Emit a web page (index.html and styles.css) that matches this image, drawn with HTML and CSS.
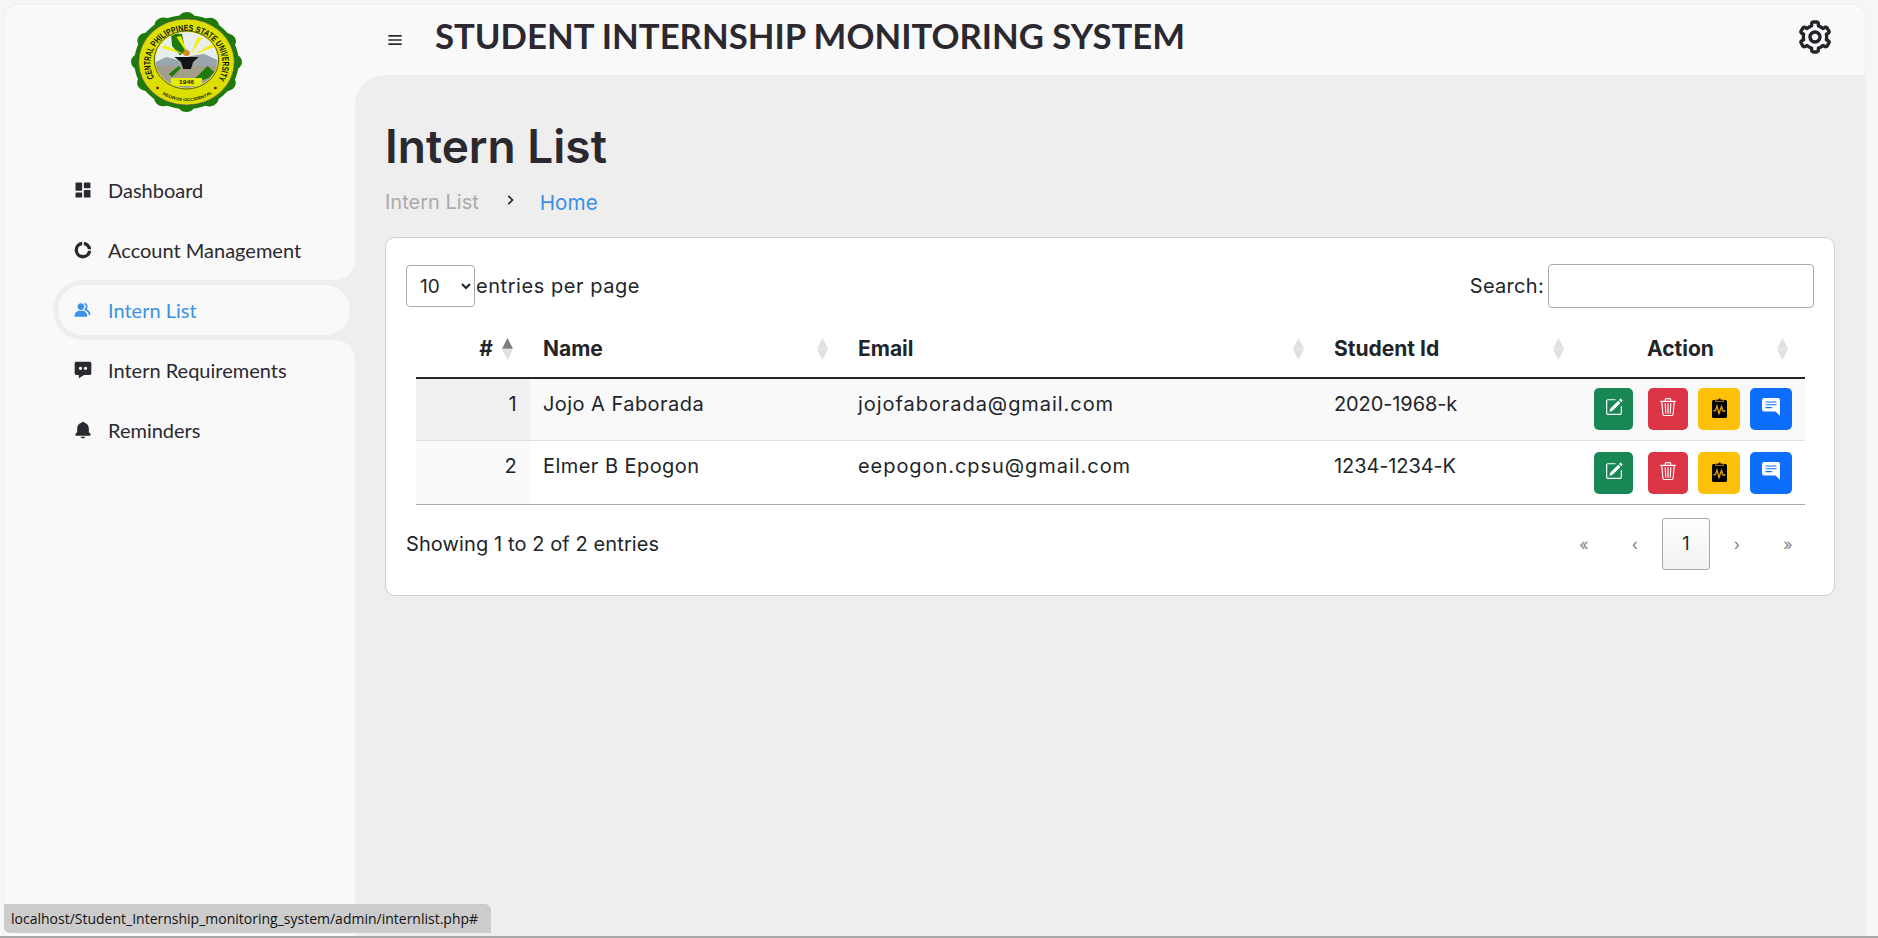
FILE: index.html
```html
<!DOCTYPE html>
<html lang="en">
<head>
    <meta charset="UTF-8">
    <title>Intern List</title>
    <link rel="stylesheet" href="styles.css">
</head>
<body>
    <div class="window">
        <aside class="sidebar">
            <div class="brand">
                <svg class="seal" viewBox="0 0 100 100" preserveAspectRatio="none">
                    <circle cx="50" cy="50" r="47" fill="#1f7a0c"/>
                    <circle cx="50" cy="50" r="42" fill="none" stroke="#1f7a0c" stroke-width="16" stroke-linecap="round" stroke-dasharray="0.01 21.980"/>
                    <circle cx="50" cy="50" r="43" fill="#dbe000" stroke="#7a2fa0" stroke-width="0.5"/>
                    <circle cx="50" cy="48" r="29" fill="#e6ee00" stroke="#111" stroke-width="0.6"/>
                    <path id="sealTop" d="M 21 66 A 32.500 32.500 0 1 1 79 66" fill="none"/>
                    <text class="seal-text"><textPath href="#sealTop" textLength="134" lengthAdjust="spacingAndGlyphs">CENTRAL PHILIPPINES STATE UNIVERSITY</textPath></text>
                    <path id="sealBottom" d="M 25 80 A 39 39 0 0 0 75 80" fill="none"/>
                    <text class="seal-small"><textPath href="#sealBottom" textLength="48" startOffset="4" lengthAdjust="spacingAndGlyphs">NEGROS OCCIDENTAL</textPath></text>
                    <circle cx="24" cy="76" r="1.300" fill="#7a1010"/>
                    <circle cx="76" cy="76" r="1.300" fill="#7a1010"/>
                    <clipPath id="sealInner"><circle cx="50" cy="48" r="28"/></clipPath>
                    <g clip-path="url(#sealInner)">
                        <rect x="20" y="20" width="60" height="60" fill="#e8eded"/>
                        <path d="M22 50 L32 45 L42 48 L54 44 L66 42 L78 48 L78 60 L22 60 Z" fill="#9aa6ad"/>
                        <rect x="22" y="54" width="56" height="24" fill="#a39d8c"/>
                        <path d="M36 21 L46 22 L48 34 L51 40 L44 43 L37 34 Z" fill="#1f7a0c"/>
                        <path d="M60 64 L69 54 L75 60 L70 66 L62 69 L55 68 Z" fill="#1f7a0c"/>
                        <path d="M34 62 L43 54 L45 56 L37 65 Z" fill="#1f7a0c"/>
                        <path d="M41 25 L45 24 L51 42 Z M60 25 L64 26 L54 42 Z M28 36 L30 33 L50 43 Z M73 32 L75 35 L56 43 Z" fill="#f5f000"/>
                        <path d="M39 45 L61 45 L56 50 L54 57 L47 57 L45 50 Z" fill="#141414"/>
                        <circle cx="50" cy="41" r="3" fill="#d98a1e"/>
                        <rect x="36" y="66" width="28" height="8" fill="#e6ee00"/>
                    </g>
                    <text class="seal-year" x="50" y="72" text-anchor="middle">1946</text>
                </svg>
            </div>
            <ul class="side-menu">
                <li><a href="#">
                    <svg class="side-icon" viewBox="0 0 24 24"><path d="M4 13h6a1 1 0 0 0 1-1V4a1 1 0 0 0-1-1H4a1 1 0 0 0-1 1v8a1 1 0 0 0 1 1zm-1 7a1 1 0 0 0 1 1h6a1 1 0 0 0 1-1v-4a1 1 0 0 0-1-1H4a1 1 0 0 0-1 1v4zm10 0a1 1 0 0 0 1 1h6a1 1 0 0 0 1-1v-7a1 1 0 0 0-1-1h-6a1 1 0 0 0-1 1v7zm1-10h6a1 1 0 0 0 1-1V4a1 1 0 0 0-1-1h-6a1 1 0 0 0-1 1v5a1 1 0 0 0 1 1z"/></svg>
                    Dashboard</a></li>
                <li class="before-active"><a href="#">
                    <svg class="side-icon" viewBox="0 0 24 24"><path d="M13 2.100v4.060A6 6 0 0 1 17.840 11h4.060A10 10 0 0 0 13 2.100zM11 2.100A10 10 0 1 0 21.900 13h-4.060A6 6 0 1 1 11 6.160z"/></svg>
                    Account Management</a></li>
                <li class="active"><a href="#">
                    <svg class="side-icon" viewBox="0 0 24 24"><path d="M16.604 11.048a5.670 5.670 0 0 0 .751-3.440c-.179-1.784-1.175-3.361-2.803-4.440l-1.105 1.666c1.119.742 1.800 1.799 1.918 2.974a3.693 3.693 0 0 1-1.072 2.986l-1.192 1.192 1.618.475C18.951 13.701 19 17.957 19 18h2c0-1.789-.956-5.285-4.396-6.952z"/><path d="M9.500 12c2.206 0 4-1.794 4-4s-1.794-4-4-4-4 1.794-4 4 1.794 4 4 4zm1.500 1H8c-3.309 0-6 2.691-6 6v1h15v-1c0-3.309-2.691-6-6-6z"/></svg>
                    Intern List</a></li>
                <li class="after-active"><a href="#">
                    <svg class="side-icon" viewBox="0 0 24 24"><path fill-rule="evenodd" d="M20 2H4c-1.103 0-2 .897-2 2v12c0 1.103.897 2 2 2h3v3.767L13.277 18H20c1.103 0 2-.897 2-2V4c0-1.103-.897-2-2-2zM9 8a2 2 0 1 1 0 4 2 2 0 0 1 0-4zm6 0a2 2 0 1 1 0 4 2 2 0 0 1 0-4z"/></svg>
                    Intern Requirements</a></li>
                <li><a href="#">
                    <svg class="side-icon" viewBox="0 0 24 24"><path d="M12 22c1.311 0 2.407-.834 2.818-2H9.182C9.593 21.166 10.689 22 12 22zm7-7.414V10c0-3.217-2.185-5.927-5.145-6.742C13.562 2.520 12.846 2 12 2s-1.562.520-1.855 1.258C7.185 4.073 5 6.783 5 10v4.586l-1.707 1.707A.996.996 0 0 0 3 17v1a1 1 0 0 0 1 1h16a1 1 0 0 0 1-1v-1a.996.996 0 0 0-.293-.707L19 14.586z"/></svg>
                    Reminders</a></li>
            </ul>
        </aside>

        <div class="main">
            <header class="topbar">
                <svg class="menu-icon" viewBox="0 0 24 24"><path d="M4 6h16v2H4zm0 5h16v2H4zm0 5h16v2H4z"/></svg>
                <div class="app-title">STUDENT INTERNSHIP MONITORING SYSTEM</div>
                <svg class="cog-icon" viewBox="0 0 24 24"><path d="M12 16c2.206 0 4-1.794 4-4s-1.794-4-4-4-4 1.794-4 4 1.794 4 4 4zm0-6c1.084 0 2 .916 2 2s-.916 2-2 2-2-.916-2-2 .916-2 2-2z"/><path d="m2.845 16.136 1 1.730c.531.917 1.809 1.261 2.730.730l.529-.306A8.100 8.100 0 0 0 9 19.402V20c0 1.103.897 2 2 2h2c1.103 0 2-.897 2-2v-.598a8.132 8.132 0 0 0 1.896-1.111l.529.306c.923.530 2.198.188 2.731-.731l.999-1.729a2.001 2.001 0 0 0-.731-2.732l-.505-.292a7.718 7.718 0 0 0 0-2.224l.505-.292a2.002 2.002 0 0 0 .731-2.732l-.999-1.729c-.531-.920-1.808-1.265-2.731-.732l-.529.306A8.100 8.100 0 0 0 15 4.598V4c0-1.103-.897-2-2-2h-2c-1.103 0-2 .897-2 2v.598a8.132 8.132 0 0 0-1.896 1.111l-.529-.306c-.924-.531-2.200-.187-2.731.732l-.999 1.729a2.001 2.001 0 0 0 .731 2.732l.505.292a7.683 7.683 0 0 0 0 2.223l-.505.292a2.003 2.003 0 0 0-.731 2.733zm3.326-2.758A5.703 5.703 0 0 1 6 12c0-.462.058-.926.170-1.378a.999.999 0 0 0-.470-1.108l-1.123-.650.998-1.729 1.145.662a.997.997 0 0 0 1.188-.142 6.071 6.071 0 0 1 2.384-1.399A1 1 0 0 0 11 5.300V4h2v1.300a1 1 0 0 0 .708.956 6.083 6.083 0 0 1 2.384 1.399.999.999 0 0 0 1.188.142l1.144-.661 1 1.729-1.124.649a1 1 0 0 0-.470 1.108c.112.452.170.916.170 1.378 0 .461-.058.925-.171 1.378a1 1 0 0 0 .471 1.108l1.123.649-.998 1.729-1.145-.661a.996.996 0 0 0-1.188.142 6.071 6.071 0 0 1-2.384 1.399A1 1 0 0 0 13 18.700l.002 1.300H11v-1.300a1 1 0 0 0-.708-.956 6.083 6.083 0 0 1-2.384-1.399.992.992 0 0 0-1.188-.141l-1.144.662-1-1.729 1.124-.651a1 1 0 0 0 .471-1.108z"/></svg>
            </header>

            <main class="content">
                <h1>Intern List</h1>
                <div class="breadcrumb">
                    <span class="crumb">Intern List</span>
                    <svg class="crumb-sep" viewBox="0 0 24 24"><path d="M10.707 17.707 16.414 12l-5.707-5.707-1.414 1.414L13.586 12l-4.293 4.293z"/></svg>
                    <a class="crumb-link" href="#">Home</a>
                </div>

                <section class="card">
                    <div class="table-top">
                        <label class="per-page">
                            <select class="page-size"><option>10</option></select>entries per page
                        </label>
                        <label class="search">Search:<input class="search-input" type="text"></label>
                    </div>

                    <table class="intern-table">
                        <colgroup>
                            <col class="col-num"><col class="col-name"><col class="col-email"><col class="col-id"><col class="col-action">
                        </colgroup>
                        <thead>
                            <tr>
                                <th><div class="th-inner th-num">#
                                    <svg class="sort" viewBox="0 0 11 22"><path class="sort-up on" d="M5.500 0 11 10.700H0z"/><path class="sort-down" d="M5.500 22 0 11.300h11z"/></svg></div></th>
                                <th><div class="th-inner">Name
                                    <svg class="sort" viewBox="0 0 11 22"><path class="sort-up" d="M5.500 0 11 10.700H0z"/><path class="sort-down" d="M5.500 22 0 11.300h11z"/></svg></div></th>
                                <th><div class="th-inner">Email
                                    <svg class="sort" viewBox="0 0 11 22"><path class="sort-up" d="M5.500 0 11 10.700H0z"/><path class="sort-down" d="M5.500 22 0 11.300h11z"/></svg></div></th>
                                <th><div class="th-inner">Student Id
                                    <svg class="sort" viewBox="0 0 11 22"><path class="sort-up" d="M5.500 0 11 10.700H0z"/><path class="sort-down" d="M5.500 22 0 11.300h11z"/></svg></div></th>
                                <th><div class="th-inner"><span class="action-label">Action</span>
                                    <svg class="sort" viewBox="0 0 11 22"><path class="sort-up" d="M5.500 0 11 10.700H0z"/><path class="sort-down" d="M5.500 22 0 11.300h11z"/></svg></div></th>
                            </tr>
                        </thead>
                        <tbody>
                            <tr class="odd">
                                <td class="num">1</td>
                                <td class="name">Jojo A Faborada</td>
                                <td class="email">jojofaborada@gmail.com</td>
                                <td class="student-id">2020-1968-k</td>
                                <td class="actions">
                                    <div class="btn-row">
                                        <a class="btn btn-green" href="#"><svg class="btn-icon" viewBox="0 0 16 16"><path d="M15.502 1.940a.5.5 0 0 1 0 .706L14.459 3.690l-2-2L13.502.646a.5.5 0 0 1 .707 0l1.293 1.293zm-1.750 2.456-2-2L4.939 9.210a.5.5 0 0 0-.121.196l-.805 2.414a.25.25 0 0 0 .316.316l2.414-.805a.5.5 0 0 0 .196-.120l6.813-6.814z"/><path fill-rule="evenodd" d="M1 13.500A1.500 1.500 0 0 0 2.500 15h11a1.500 1.500 0 0 0 1.500-1.500v-6a.5.5 0 0 0-1 0v6a.5.5 0 0 1-.5.5h-11a.5.5 0 0 1-.5-.5v-11a.5.5 0 0 1 .5-.5H9a.5.5 0 0 0 0-1H2.500A1.500 1.500 0 0 0 1 2.500v11z"/></svg></a>
                                        <a class="btn btn-red" href="#"><svg class="btn-icon" viewBox="0 0 16 16"><path d="M6.500 1h3a.5.5 0 0 1 .5.5v1H6v-1a.5.5 0 0 1 .5-.5ZM11 2.500v-1A1.500 1.500 0 0 0 9.500 0h-3A1.500 1.500 0 0 0 5 1.500v1H2.506a.58.58 0 0 0-.01 0H1.500a.5.5 0 0 0 0 1h.538l.853 10.660A2 2 0 0 0 4.885 16h6.230a2 2 0 0 0 1.994-1.840l.853-10.660h.538a.5.5 0 0 0 0-1h-.995a.59.59 0 0 0-.01 0H11Zm1.958 1-.846 10.580a1 1 0 0 1-.997.92h-6.230a1 1 0 0 1-.997-.92L3.042 3.500h9.916Zm-7.487 1a.5.5 0 0 1 .528.47l.5 8.500a.5.5 0 0 1-.998.06L5 5.030a.5.5 0 0 1 .47-.53Zm5.058 0a.5.5 0 0 1 .47.53l-.5 8.500a.5.5 0 1 1-.998-.06l.5-8.500a.5.5 0 0 1 .528-.47ZM8 4.500a.5.5 0 0 1 .5.5v8.500a.5.5 0 0 1-1 0V5a.5.5 0 0 1 .5-.5Z"/></svg></a>
                                        <a class="btn btn-yellow" href="#"><svg class="clip-icon" viewBox="0 0 15 20"><rect x="0" y="2" width="15" height="18" rx="1.500" fill="#000"/><path d="M3.500 3.500V1.800h2.300a1.800 1.800 0 0 1 3.400 0h2.300v1.700z" fill="#000" stroke="#c98a00" stroke-width=".8"/><path d="M1.500 13 3.500 12.500 5 8 7 15.500 9.500 8.500 11 13h2.500" fill="none" stroke="#e8a400" stroke-width="1.300"/></svg></a>
                                        <a class="btn btn-blue" href="#"><svg class="btn-icon" viewBox="0 0 16 16"><path d="M16 2a2 2 0 0 0-2-2H2a2 2 0 0 0-2 2v8a2 2 0 0 0 2 2h9.586a1 1 0 0 1 .707.293l2.853 2.853A.5.5 0 0 0 16 14.793V2zM3.500 3h9a.5.5 0 0 1 0 1h-9a.5.5 0 0 1 0-1zm0 2.500h9a.5.5 0 0 1 0 1h-9a.5.5 0 0 1 0-1zm0 2.500h5a.5.5 0 0 1 0 1h-5a.5.5 0 0 1 0-1z"/></svg></a>
                                    </div>
                                </td>
                            </tr>
                            <tr class="even">
                                <td class="num">2</td>
                                <td class="name">Elmer B Epogon</td>
                                <td class="email">eepogon.cpsu@gmail.com</td>
                                <td class="student-id">1234-1234-K</td>
                                <td class="actions">
                                    <div class="btn-row">
                                        <a class="btn btn-green" href="#"><svg class="btn-icon" viewBox="0 0 16 16"><path d="M15.502 1.940a.5.5 0 0 1 0 .706L14.459 3.690l-2-2L13.502.646a.5.5 0 0 1 .707 0l1.293 1.293zm-1.750 2.456-2-2L4.939 9.210a.5.5 0 0 0-.121.196l-.805 2.414a.25.25 0 0 0 .316.316l2.414-.805a.5.5 0 0 0 .196-.120l6.813-6.814z"/><path fill-rule="evenodd" d="M1 13.500A1.500 1.500 0 0 0 2.500 15h11a1.500 1.500 0 0 0 1.500-1.500v-6a.5.5 0 0 0-1 0v6a.5.5 0 0 1-.5.5h-11a.5.5 0 0 1-.5-.5v-11a.5.5 0 0 1 .5-.5H9a.5.5 0 0 0 0-1H2.500A1.500 1.500 0 0 0 1 2.500v11z"/></svg></a>
                                        <a class="btn btn-red" href="#"><svg class="btn-icon" viewBox="0 0 16 16"><path d="M6.500 1h3a.5.5 0 0 1 .5.5v1H6v-1a.5.5 0 0 1 .5-.5ZM11 2.500v-1A1.500 1.500 0 0 0 9.500 0h-3A1.500 1.500 0 0 0 5 1.500v1H2.506a.58.58 0 0 0-.01 0H1.500a.5.5 0 0 0 0 1h.538l.853 10.660A2 2 0 0 0 4.885 16h6.230a2 2 0 0 0 1.994-1.840l.853-10.660h.538a.5.5 0 0 0 0-1h-.995a.59.59 0 0 0-.01 0H11Zm1.958 1-.846 10.580a1 1 0 0 1-.997.92h-6.230a1 1 0 0 1-.997-.92L3.042 3.500h9.916Zm-7.487 1a.5.5 0 0 1 .528.47l.5 8.500a.5.5 0 0 1-.998.06L5 5.030a.5.5 0 0 1 .47-.53Zm5.058 0a.5.5 0 0 1 .47.53l-.5 8.500a.5.5 0 1 1-.998-.06l.5-8.500a.5.5 0 0 1 .528-.47ZM8 4.500a.5.5 0 0 1 .5.5v8.500a.5.5 0 0 1-1 0V5a.5.5 0 0 1 .5-.5Z"/></svg></a>
                                        <a class="btn btn-yellow" href="#"><svg class="clip-icon" viewBox="0 0 15 20"><rect x="0" y="2" width="15" height="18" rx="1.500" fill="#000"/><path d="M3.500 3.500V1.800h2.300a1.800 1.800 0 0 1 3.400 0h2.300v1.700z" fill="#000" stroke="#c98a00" stroke-width=".8"/><path d="M1.500 13 3.500 12.500 5 8 7 15.500 9.500 8.500 11 13h2.500" fill="none" stroke="#e8a400" stroke-width="1.300"/></svg></a>
                                        <a class="btn btn-blue" href="#"><svg class="btn-icon" viewBox="0 0 16 16"><path d="M16 2a2 2 0 0 0-2-2H2a2 2 0 0 0-2 2v8a2 2 0 0 0 2 2h9.586a1 1 0 0 1 .707.293l2.853 2.853A.5.5 0 0 0 16 14.793V2zM3.500 3h9a.5.5 0 0 1 0 1h-9a.5.5 0 0 1 0-1zm0 2.500h9a.5.5 0 0 1 0 1h-9a.5.5 0 0 1 0-1zm0 2.500h5a.5.5 0 0 1 0 1h-5a.5.5 0 0 1 0-1z"/></svg></a>
                                    </div>
                                </td>
                            </tr>
                        </tbody>
                    </table>

                    <div class="table-bottom">
                        <div class="info">Showing 1 to 2 of 2 entries</div>
                        <div class="pager">
                            <a class="page-btn" href="#">«</a>
                            <a class="page-btn" href="#">‹</a>
                            <a class="page-btn current" href="#">1</a>
                            <a class="page-btn" href="#">›</a>
                            <a class="page-btn" href="#">»</a>
                        </div>
                    </div>
                </section>
            </main>
        </div>
    </div>
    <div class="status-bar">localhost/Student_Internship_monitoring_system/admin/internlist.php#</div>
</body>
</html>
```

FILE: styles.css
```css
* {
    box-sizing: border-box;
}
html, body {
    height: 938px;
    overflow: hidden;
}
body {
    margin: 0;
    padding: 5px 13px 0 5px;
    background: #f6f6f6;
    border-bottom: 2px solid #a8a8a8;
    font-family: Inter, "Open Sans", sans-serif;
    color: #2c2830;
}
a {
    text-decoration: none;
    color: inherit;
}
.window {
    display: flex;
    height: 931px;
    background: #f9f9f9;
    border-radius: 12px 12px 0 0;
    box-shadow: 0 0 0 1px #eeeeee;
    overflow: hidden;
}

/* sidebar */
.sidebar {
    width: 350px;
    flex-shrink: 0;
    background: #f9f9f9;
}
.brand {
    height: 155px;
    padding: 7px 0 0 126px;
}
.seal {
    display: block;
    width: 111px;
    height: 100px;
}
.seal-text {
    font-family: "Liberation Sans", sans-serif;
    font-weight: 700;
    font-size: 8.500px;
    fill: #111;
}
.seal-small {
    font-family: "Liberation Sans", sans-serif;
    font-weight: 700;
    font-size: 4.200px;
    fill: #1a1a1a;
}
.seal-year {
    font-family: "Liberation Sans", sans-serif;
    font-weight: 700;
    font-size: 6px;
    fill: #111;
}
.side-menu {
    list-style: none;
    margin: 0;
    padding: 0;
}
.side-menu li {
    height: 60px;
}
.side-menu a {
    display: flex;
    align-items: center;
    gap: 15px;
    height: 100%;
    padding-left: 69px;
    background: #f9f9f9;
    font-family: Lato, sans-serif;
    font-size: 20px;
}
.side-icon {
    width: 20px;
    height: 20px;
    margin-left: -1px;
    fill: #2c2830;
    flex-shrink: 0;
}
.side-menu li.before-active,
.side-menu li.after-active {
    background: #eeeeee;
}
.before-active a {
    border-bottom-right-radius: 20px;
}
.after-active a {
    border-top-right-radius: 20px;
}
.side-menu li.active {
    margin-left: 48px;
    padding: 5px;
    background: #eeeeee;
    border-radius: 30px 0 0 30px;
}
.side-menu li.active a {
    padding-left: 16px;
    border-radius: 25px;
    color: #3c91e6;
}
.active .side-icon {
    fill: #3c91e6;
}

/* top bar */
.main {
    flex: 1;
    display: flex;
    flex-direction: column;
    min-width: 0;
}
.topbar {
    height: 70px;
    flex-shrink: 0;
    display: flex;
    align-items: center;
    padding: 0 30px 6px 30px;
}
.menu-icon {
    width: 20px;
    height: 20px;
    margin-top: 6px;
    fill: #2c2830;
}
.app-title {
    flex: 1;
    margin-left: 30px;
    font-family: Lato, sans-serif;
    font-weight: 700;
    font-size: 34.700px;
    line-height: 40px;
    margin-bottom: 2px;
    color: #2c2830;
}
.cog-icon {
    width: 40px;
    height: 40px;
    fill: #212529;
}

/* content */
.content {
    flex: 1;
    padding: 35px 30px 0 30px;
    background: #eeeeee;
    border-radius: 30px 0 0 0;
}
h1 {
    margin: 0;
    font-size: 46px;
    line-height: 72px;
    font-weight: 600;
    color: #2c2830;
}
.breadcrumb {
    display: flex;
    align-items: center;
    margin-top: 5px;
    height: 30px;
    font-size: 20px;
}
.crumb {
    color: #aaaaaa;
}
.crumb-sep {
    width: 20px;
    height: 20px;
    margin: -4px 20px 0 21px;
    fill: #2c2830;
}
.crumb-link {
    font-size: 20.700px;
    color: #3c91e6;
}

/* card */
.card {
    margin-top: 20px;
    height: 359px;
    padding: 26px 20px 0 20px;
    background: #ffffff;
    border: 1px solid #cfcfcf;
    border-radius: 10px;
    font-size: 20px;
    letter-spacing: .3px;
    color: #212529;
}
.table-top {
    display: flex;
    justify-content: space-between;
    align-items: center;
    height: 44px;
}
.per-page,
.search {
    display: flex;
    align-items: center;
}
.per-page {
    letter-spacing: .55px;
}
.page-size {
    width: 69px;
    height: 42px;
    padding: 0 0 0 9px;
    margin-right: 1px;
    background: #ffffff;
    border: 1px solid #aaaaaa;
    border-radius: 4px;
    font-family: inherit;
    font-size: 19px;
    letter-spacing: 0;
    color: #212529;
}
.search-input {
    width: 266px;
    height: 44px;
    margin-left: 4px;
    background: #ffffff;
    border: 1px solid #aaaaaa;
    border-radius: 4px;
}

/* table */
.intern-table {
    width: 1389px;
    margin: 8px 0 0 10px;
    border-collapse: collapse;
    table-layout: fixed;
}
.col-num {
    width: 114px;
}
.col-name {
    width: 315px;
}
.col-email {
    width: 476px;
}
.col-id {
    width: 260px;
}
.col-action {
    width: 224px;
}
th {
    height: 62px;
    padding: 4px 13px 0;
    border-bottom: 2px solid #212529;
    font-weight: 700;
    font-size: 21px;
    letter-spacing: 0;
    text-align: left;
}
.th-inner {
    display: flex;
    justify-content: space-between;
    align-items: center;
}
.th-num {
    justify-content: flex-end;
    gap: 9px;
}
.action-label {
    flex: 1;
    padding-right: 10px;
    text-align: center;
}
.sort {
    width: 11px;
    height: 22px;
    flex-shrink: 0;
    margin-right: 4px;
}
.sort-up,
.sort-down {
    fill: #e0e0e0;
}
.sort-up.on {
    fill: #7f7f7f;
}
td {
    height: 62px;
    padding: 12px 13px 0;
    vertical-align: top;
    line-height: 27px;
    border-bottom: 1px solid #dee2e6;
}
td.name {
    letter-spacing: .45px;
}
td.email {
    letter-spacing: .95px;
}
td.student-id {
    letter-spacing: -.1px;
}
.odd td {
    background: #f9f9f9;
}
.odd td.num {
    background: #f1f1f1;
}
.even td {
    height: 64px;
    background: #ffffff;
    border-bottom: 1px solid #aaaaaa;
}
.even td.num {
    background: #fafafa;
}
td.num {
    text-align: right;
}
td.actions {
    padding: 9px 13px 0 13px;
}
.even td.actions {
    padding-top: 11px;
}
.btn-row {
    display: flex;
    gap: 10px;
}
.btn {
    display: flex;
    align-items: center;
    justify-content: center;
    width: 42px;
    height: 42px;
    border-radius: 5px;
}
.btn-green {
    width: 39px;
    margin-right: 5px;
    background: #198754;
}
.btn-red {
    width: 40px;
    background: #dc3545;
}
.btn-yellow {
    background: #ffc107;
}
.btn-blue {
    background: #0d6efd;
}
.btn-icon {
    width: 18px;
    height: 18px;
    margin-bottom: 4px;
    fill: #ffffff;
}
.clip-icon {
    width: 15px;
    height: 20px;
    margin-bottom: 2px;
}

/* footer of the table */
.table-bottom {
    display: flex;
    justify-content: space-between;
    align-items: center;
    margin-top: 13px;
}
.info {
    letter-spacing: .1px;
}
.pager {
    display: flex;
    align-items: center;
    margin-right: 2px;
    gap: 3px;
}
.page-btn {
    display: flex;
    align-items: center;
    justify-content: center;
    width: 48px;
    height: 52px;
    color: #7a7f87;
    font-size: 16px;
}
.page-btn.current {
    border: 1px solid #aaaaaa;
    border-radius: 3px;
    background: linear-gradient(to bottom, #ffffff 0%, #f1f1f1 100%);
    color: #212529;
    font-size: 18px;
}

/* browser link preview, sits over the page */
.status-bar {
    position: absolute;
    left: 4px;
    top: 904px;
    width: 487px;
    height: 29px;
    padding-left: 7px;
    background: #cccccc;
    border-radius: 0 6px 0 6px;
    font-family: "Open Sans", sans-serif;
    font-size: 14px;
    line-height: 29px;
    color: #111111;
    white-space: nowrap;
}
```
